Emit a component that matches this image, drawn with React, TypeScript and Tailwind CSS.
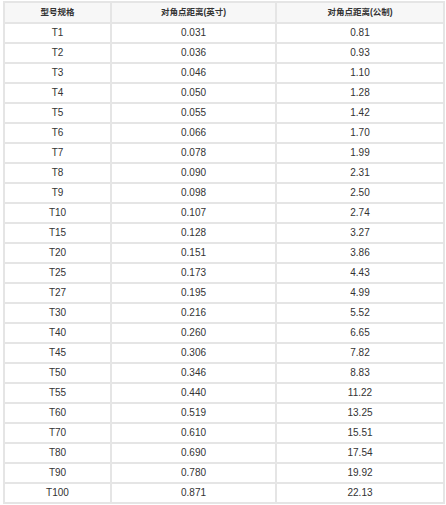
import React from "react";

const rows: [string, string, string][] = [
  ["T1", "0.031", "0.81"],
  ["T2", "0.036", "0.93"],
  ["T3", "0.046", "1.10"],
  ["T4", "0.050", "1.28"],
  ["T5", "0.055", "1.42"],
  ["T6", "0.066", "1.70"],
  ["T7", "0.078", "1.99"],
  ["T8", "0.090", "2.31"],
  ["T9", "0.098", "2.50"],
  ["T10", "0.107", "2.74"],
  ["T15", "0.128", "3.27"],
  ["T20", "0.151", "3.86"],
  ["T25", "0.173", "4.43"],
  ["T27", "0.195", "4.99"],
  ["T30", "0.216", "5.52"],
  ["T40", "0.260", "6.65"],
  ["T45", "0.306", "7.82"],
  ["T50", "0.346", "8.83"],
  ["T55", "0.440", "11.22"],
  ["T60", "0.519", "13.25"],
  ["T70", "0.610", "15.51"],
  ["T80", "0.690", "17.54"],
  ["T90", "0.780", "19.92"],
  ["T100", "0.871", "22.13"],
];

export default function App() {
  return (
    <div
      className="w-[446px] h-[505px] bg-white pl-[3px] pt-[1px] overflow-hidden text-[#333] text-[10px]"
      style={{ fontFamily: '"Liberation Sans", "Noto Sans CJK SC", sans-serif' }}
    >
      <table className="border-collapse w-[440px] table-fixed">
        <colgroup>
          <col className="w-[107px]" />
          <col className="w-[165px]" />
          <col className="w-[168px]" />
        </colgroup>
        <thead>
          <tr className="bg-[#f7f7f7] h-[21px]">
            <th className="border-2 border-[#e5e5e5] p-0 font-bold text-center leading-none text-[8.5px]">型号规格</th>
            <th className="border-2 border-[#e5e5e5] p-0 font-bold text-center leading-none text-[8.5px]">对角点距离(英寸)</th>
            <th className="border-2 border-[#e5e5e5] p-0 font-bold text-center leading-none text-[8.5px]">对角点距离(公制)</th>
          </tr>
        </thead>
        <tbody>
          {rows.map((r) => (
            <tr key={r[0]} className="h-[20px]">
              <td className="border-2 border-[#e5e5e5] p-0 text-center leading-none">{r[0]}</td>
              <td className="border-2 border-[#e5e5e5] p-0 text-center leading-none">{r[1]}</td>
              <td className="border-2 border-[#e5e5e5] p-0 text-center leading-none">{r[2]}</td>
            </tr>
          ))}
        </tbody>
      </table>
    </div>
  );
}
